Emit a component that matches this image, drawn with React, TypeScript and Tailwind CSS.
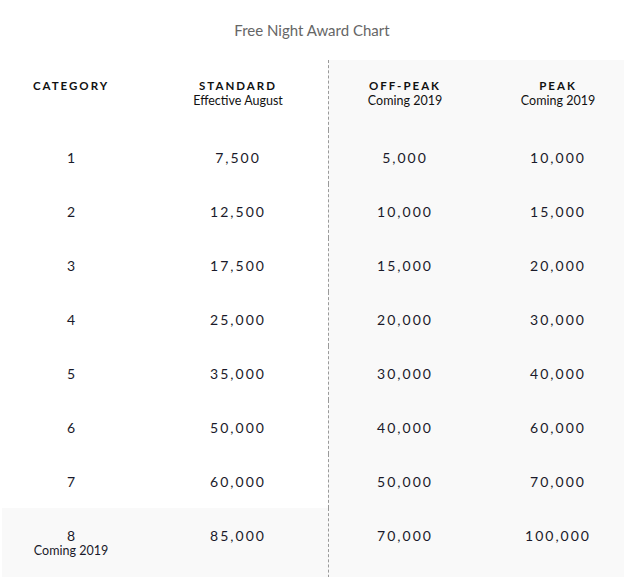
import React from "react"

const rows = [
  { cat: "1", std: "7,500", off: "5,000", peak: "10,000" },
  { cat: "2", std: "12,500", off: "10,000", peak: "15,000" },
  { cat: "3", std: "17,500", off: "15,000", peak: "20,000" },
  { cat: "4", std: "25,000", off: "20,000", peak: "30,000" },
  { cat: "5", std: "35,000", off: "30,000", peak: "40,000" },
  { cat: "6", std: "50,000", off: "40,000", peak: "60,000" },
  { cat: "7", std: "60,000", off: "50,000", peak: "70,000" },
]

const font = { fontFamily: "Lato, 'Open Sans', sans-serif" }

function Row({ cat, std, off, peak, sub, last }: { cat: string; std: string; off: string; peak: string; sub?: string; last?: boolean }) {
  const leftBg = last ? "bg-[#f9f9f9]" : "bg-white"
  return (
    <div className={`grid grid-cols-[146px_180px_153px_154px] ${last ? "h-[80px]" : "h-[54px]"}`}>
      <div className={`${leftBg} pr-2 pt-[20px] text-center`}>
        <div className="text-[14px] leading-4 text-[#1a1a2a]">{cat}</div>
        {sub && <div className="text-[12.5px] leading-[14px] text-[#1a1a2a]">{sub}</div>}
      </div>
      <div className={`${leftBg} pt-[20px] text-center text-[14px] leading-4 tracking-[2px] text-[#1a1a2a]`}>{std}</div>
      <div className="border-l border-dashed border-[#9a9a9a] bg-[#f9f9f9] pt-[20px] text-center text-[14px] leading-4 tracking-[2px] text-[#1a1a2a]">{off}</div>
      <div className="bg-[#f9f9f9] pt-[20px] text-center text-[14px] leading-4 tracking-[2px] text-[#1a1a2a]">{peak}</div>
    </div>
  )
}

export default function App() {
  return (
    <div className="w-[624px] h-[577px] overflow-hidden bg-white" style={font}>
      <div className="h-[60px] flex items-center justify-center text-[15px] text-[#666]">
        Free Night Award Chart
      </div>
      <div className="ml-[2px] w-[633px]">
        <div className="grid grid-cols-[146px_180px_153px_154px] h-[70px]">
          <div className="pr-2 pt-[18px] text-center text-[11.5px] leading-4 font-bold tracking-[2px] text-[#111]">CATEGORY</div>
          <div className="pt-[18px] text-center">
            <div className="text-[11.5px] leading-4 font-bold tracking-[2px] text-[#111]">STANDARD</div>
            <div className="text-[12.5px] leading-[14px] text-[#111]">Effective August</div>
          </div>
          <div className="border-l border-dashed border-[#9a9a9a] bg-[#f9f9f9] pt-[18px] text-center">
            <div className="text-[11.5px] leading-4 font-bold tracking-[2px] text-[#111]">OFF-PEAK</div>
            <div className="text-[12.5px] leading-[14px] text-[#111]">Coming 2019</div>
          </div>
          <div className="bg-[#f9f9f9] pt-[18px] text-center">
            <div className="text-[11.5px] leading-4 font-bold tracking-[2px] text-[#111]">PEAK</div>
            <div className="text-[12.5px] leading-[14px] text-[#111]">Coming 2019</div>
          </div>
        </div>
        {rows.map(r => (
          <Row key={r.cat} {...r} />
        ))}
        <Row cat="8" sub="Coming 2019" std="85,000" off="70,000" peak="100,000" last />
      </div>
    </div>
  )
}
